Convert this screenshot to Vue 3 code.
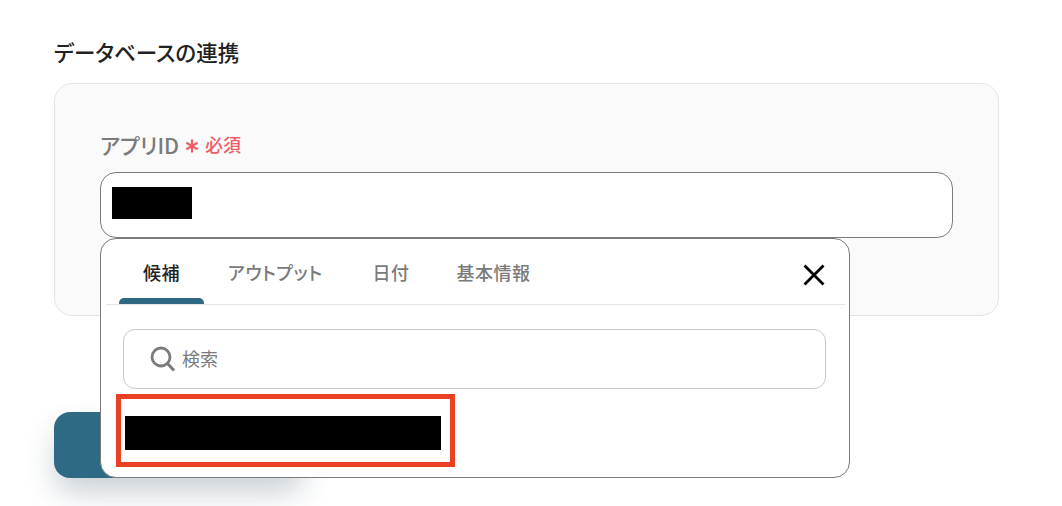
<script setup>
const tabs = [
  { label: '候補', active: true },
  { label: 'アウトプット', active: false },
  { label: '日付', active: false },
  { label: '基本情報', active: false },
]
</script>

<template>
  <main class="page">
    <h2 class="heading">データベースの連携</h2>
    <section class="card">
      <div class="label-row">
        <span class="label">アプリID</span>
        <svg class="asterisk" width="14" height="14" viewBox="0 0 14 14" aria-hidden="true">
          <path d="M7 0.5V13.5M1.4 3.8L12.6 10.2M12.6 3.8L1.4 10.2" fill="none" stroke="#ef5b66" stroke-width="2.2" />
        </svg>
        <span class="required">必須</span>
      </div>
      <div class="field">
        <div class="input">
          <div class="redacted-value"></div>
        </div>
        <div class="dropdown">
          <div class="tabs">
            <div v-for="tab in tabs" :key="tab.label" class="tab" :class="{ active: tab.active }">
              {{ tab.label }}
            </div>
            <button class="close" type="button" aria-label="閉じる">
              <svg width="22" height="22" viewBox="0 0 22 22">
                <path d="M1.5 1.5L20.5 20.5M20.5 1.5L1.5 20.5" fill="none" stroke="#000" stroke-width="2.8" />
              </svg>
            </button>
          </div>
          <div class="search">
            <svg class="search-icon" width="26" height="26" viewBox="0 0 26 26" aria-hidden="true">
              <circle cx="11" cy="11" r="9" fill="none" stroke="#7b7b7b" stroke-width="2.8" />
              <path d="M17.5 17.5L24 24.5" fill="none" stroke="#7b7b7b" stroke-width="3" />
            </svg>
            <span class="search-text">検索</span>
          </div>
          <div class="redacted-option"></div>
          <div class="highlight"></div>
        </div>
      </div>
    </section>
    <div class="submit"></div>
  </main>
</template>

<style scoped>
.page {
  box-sizing: border-box;
  width: 1062px;
  height: 506px;
  padding: 36px 63px 0 54px;
  overflow: hidden;
  background: #fff;
  font-family: "Noto Sans CJK JP", "Noto Sans", sans-serif;
  font-feature-settings: "palt";
}
.heading {
  margin: 0 0 31px;
  font-size: 21.5px;
  line-height: 32px;
  height: 16px;
  font-weight: 500;
  color: #222;
}
.card {
  box-sizing: border-box;
  height: 233px;
  padding: 47px 45px 0;
  background: #fafafa;
  border: 1px solid #e4e4e6;
  border-radius: 18px;
}
.label-row {
  display: flex;
  align-items: center;
  height: 26px;
  margin-bottom: 15px;
}
.label {
  font-size: 21.5px;
  font-weight: 500;
  color: #7b7b7b;
}
.asterisk {
  margin: 4px 6px 0 6px;
}
.required {
  font-size: 18px;
  font-weight: 500;
  color: #ef5b66;
}
.field {
  position: relative;
}
.input {
  box-sizing: border-box;
  display: flex;
  align-items: center;
  height: 66px;
  padding: 0 0 4px 11px;
  background: #fff;
  border: 1px solid #7b7b7b;
  border-radius: 16px;
}
.redacted-value {
  width: 80px;
  height: 32px;
  background: #000;
}
.dropdown {
  position: absolute;
  top: 100%;
  left: 0;
  box-sizing: border-box;
  width: 750px;
  height: 240px;
  background: #fff;
  border: 1px solid #7b7b7b;
  border-radius: 16px;
}
.tabs {
  box-sizing: border-box;
  display: flex;
  align-items: stretch;
  height: 66px;
  margin: 0 4px 0 5px;
  padding-left: 13px;
  border-bottom: 1px solid #e4e4e4;
}
.tab {
  position: relative;
  display: flex;
  align-items: center;
  padding: 0 24px;
  font-size: 18px;
  font-weight: 500;
  letter-spacing: 0.5px;
  color: #7b7b7b;
}
.tab:nth-child(3) {
  margin: 0 -1px 0 2px;
}
.tab.active {
  color: #222;
}
.tab.active::after {
  content: "";
  position: absolute;
  left: 0;
  right: 0;
  bottom: 0;
  height: 6px;
  background: #2f6a85;
  border-radius: 5px 5px 0 0;
}
.close {
  display: flex;
  align-items: center;
  margin-left: auto;
  margin-right: 20px;
  padding: 7px 0 0;
  background: none;
  border: 0;
}
.search {
  box-sizing: border-box;
  display: flex;
  align-items: center;
  height: 60px;
  margin: 24px 23px 0 22px;
  padding-left: 26px;
  border: 1px solid #c9c9c9;
  border-radius: 12px;
}
.search-icon {
  margin-right: 6px;
}
.search-text {
  padding-bottom: 2px;
  font-size: 18px;
  color: #7b7b7b;
}
.redacted-option {
  width: 316px;
  height: 34px;
  margin: 27px 0 0 24px;
  background: #000;
}
.highlight {
  position: absolute;
  left: 15px;
  top: 155px;
  box-sizing: border-box;
  width: 339px;
  height: 73px;
  border: 5px solid #ea4125;
}
.submit {
  width: 250px;
  height: 66px;
  margin-top: 96px;
  background: #2f6a85;
  border-radius: 16px;
  box-shadow: 0 16px 30px -2px rgba(30, 60, 80, 0.24);
}
</style>
